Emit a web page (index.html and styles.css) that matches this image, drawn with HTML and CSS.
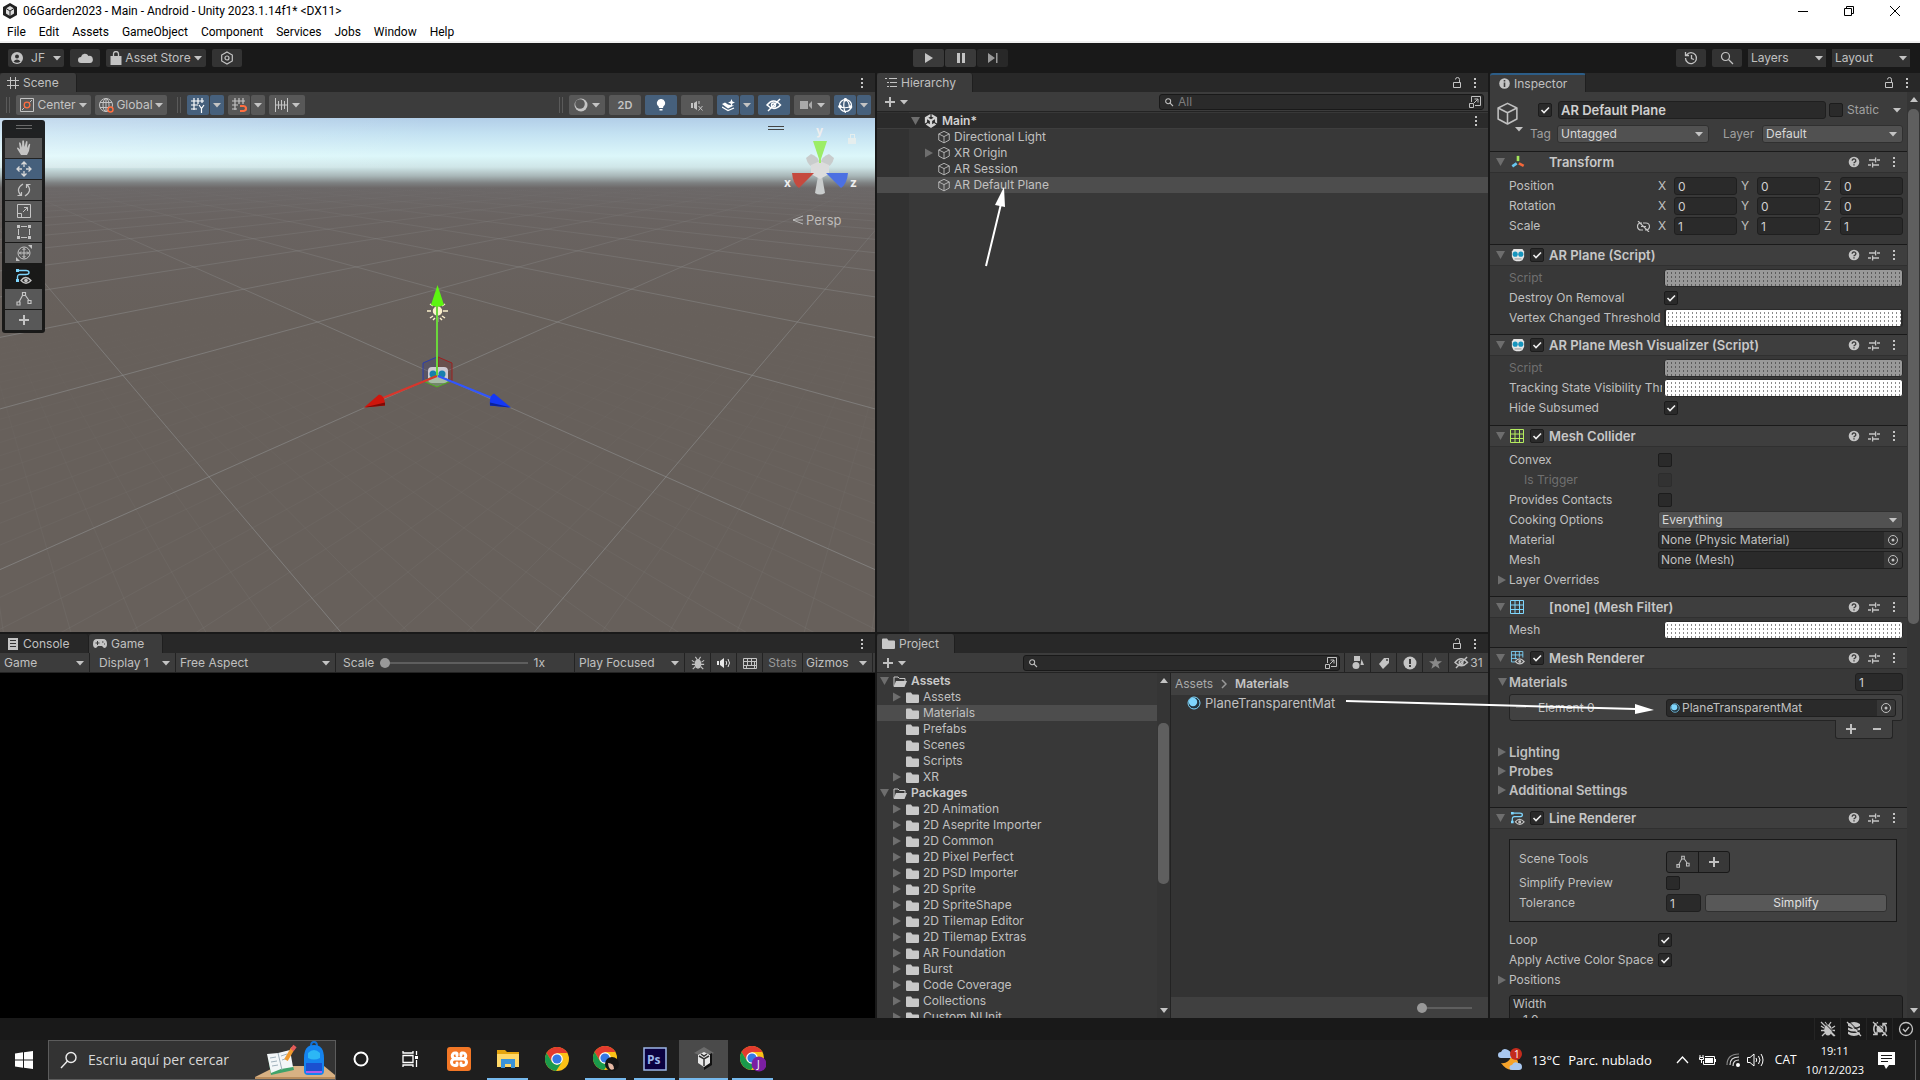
FILE: index.html
```
<!DOCTYPE html>
<html lang="ca">
<head>
    <meta charset="UTF-8">
    <title>06Garden2023 - Main - Android - Unity 2023.1.14f1* &lt;DX11&gt;</title>
    <link rel="stylesheet" href="styles.css">
</head>
<body>
    <!-- shared icons -->
    <svg class="sprite" aria-hidden="true">
        <symbol id="i-dots" viewBox="0 0 4 14"><path fill="currentColor" d="M1 2h2v2H1zM1 6h2v2H1zM1 10h2v2H1z"/></symbol>
        <symbol id="i-caret" viewBox="0 0 8 6"><path fill="currentColor" d="M0 1h8L4 5.500z"/></symbol>
        <symbol id="i-down" viewBox="0 0 10 10"><path fill="currentColor" d="M1 1h9L5.500 9z"/></symbol>
        <symbol id="i-right" viewBox="0 0 10 10"><path fill="currentColor" d="M1 0.500v9L9 5z"/></symbol>
        <symbol id="i-lock" viewBox="0 0 12 14"><g fill="none" stroke="currentColor"><path d="M2.500 6.500h7v5h-7z"/><path d="M8.500 6V3.500a2 2 0 0 0-4 0"/></g></symbol>
        <symbol id="i-cube" viewBox="0 0 16 16"><g fill="none" stroke="currentColor" stroke-linejoin="round"><path d="M8 1.500 14 4.500v7L8 14.700 2 11.500v-7z"/><path d="M2 4.500 8 7.500l6-3M8 7.500v7"/></g></symbol>
        <symbol id="i-help" viewBox="0 0 12 12"><circle cx="6" cy="6" r="5.300" fill="currentColor"/><path fill="none" stroke="#3e3e3e" stroke-width="1.400" d="M4.200 4.700a1.800 1.700 0 1 1 2.700 1.400Q6 6.500 6 7.300M6 8.300v1.300"/></symbol>
        <symbol id="i-preset" viewBox="0 0 12 12"><path fill="none" stroke="currentColor" stroke-width="1.300" d="M1 4h6M9 4h3M7.600 1.500v5M0 9h3M5 9h6M4.600 6.500v5"/></symbol>
        <symbol id="i-plus" viewBox="0 0 12 12"><path stroke="currentColor" stroke-width="2" d="M6 1v10M1 6h10"/></symbol>
        <symbol id="i-minus" viewBox="0 0 12 12"><path stroke="currentColor" stroke-width="2" d="M2 6h8"/></symbol>
        <symbol id="i-script" viewBox="0 0 16 16"><path fill="#e6e6e6" d="M3 1h10l2 3v6l-2 4-3 1H6l-3-1-2-4V4z"/><circle cx="4.800" cy="7" r="2.900" fill="#1795bd"/><circle cx="11.200" cy="7" r="2.900" fill="#1795bd"/><path stroke="#8a8a8a" d="M4 12.500h8"/></symbol>
        <symbol id="i-mesh" viewBox="0 0 14 14"><path fill="none" stroke="currentColor" d="M.5.500h13v13H.5zM5 .5v13M9.500.500v13M.5 5h13M.5 9.500h13"/></symbol>
        <symbol id="i-meshr" viewBox="0 0 16 16"><path fill="none" stroke="#7fd6fd" d="M13.500 7.500V.5H.5v12h4M5 .5v9M9.500.500v7M.5 4.500h13M.5 8.500H7"/><path fill="#3e3e3e" stroke="#c4c4c4" stroke-width="1.300" d="M5 12q4.500-6 10 0-5 5.500-10 0z"/><circle cx="10" cy="12" r="1.700" fill="#c4c4c4"/></symbol>
        <symbol id="i-line" viewBox="0 0 16 16"><path fill="none" stroke="#7fd6fd" stroke-width="1.400" d="M1 2.500h9q3 0 3 2t-3 2H4q-2.500 0-2.500 2.500v3"/><path fill="#7fd6fd" d="M0 1h3v3H0zM0 11h3v3H0z"/><path fill="#2c2c2c" stroke="#c4c4c4" stroke-width="1.300" d="M5 12.500q4.500-6 10 0-5 5.500-10 0z"/><circle cx="10" cy="12.500" r="1.800" fill="#c4c4c4"/></symbol>
        <symbol id="i-points" viewBox="0 0 16 16"><g fill="none" stroke="currentColor" stroke-width="1.200"><path d="M6.500 1.500h3v3h-3zM1 11h3v3H1zM12 9.500h3v3h-3zM3 11 6.500 4.500M9.500 4.500l3.500 5"/></g></symbol>
        <symbol id="i-target" viewBox="0 0 12 12"><circle cx="6" cy="6" r="4.500" fill="none" stroke="currentColor"/><circle cx="6" cy="6" r="1.500" fill="currentColor"/></symbol>
        <symbol id="i-search" viewBox="0 0 12 12"><g fill="none" stroke="currentColor" stroke-width="1.300"><circle cx="5" cy="5" r="3"/><path d="m7.300 7.300 3.500 3.500"/></g></symbol>
        <symbol id="i-open" viewBox="0 0 12 12"><path fill="none" stroke="currentColor" d="M2.500 6V.5h9v9H6M.5 7.500h4v4h-4zM5 7l4-4M5.500 3H9v3.500"/></symbol>
        <symbol id="i-folder" viewBox="0 0 13 11"><path fill="#c8c8c8" d="M0 1.500Q0 .5 1 .5h4l1.500 2H12q1 0 1 1V10q0 1-1 1H1q-1 0-1-1z"/></symbol>
        <symbol id="i-fopen" viewBox="0 0 14 11"><path fill="none" stroke="#c8c8c8" d="M1 10V1h4l1.500 1.500H12V5"/><path fill="#c8c8c8" d="M3 5h11l-2.500 6H.5z"/></symbol>
        <symbol id="i-mat" viewBox="0 0 14 14"><circle cx="7" cy="7" r="6" fill="#243640" stroke="#7fd6fd"/><circle cx="6" cy="6" r="4.200" fill="#7fd6fd"/></symbol>
        <symbol id="i-unity" viewBox="0 0 16 16"><path fill="currentColor" d="M7.300 0v3L5 4.300l3 1.800 3-1.800L8.700 3V0L15 3.600v7.200l-2.500-1.500V6L9.300 8v3.700l2.200-1.300 2.600 1.500L8 16l-6.100-4.100 2.600-1.500 2.200 1.300V8L3.500 6v3.300L1 10.800V3.600z"/></symbol>
        <symbol id="i-eye" viewBox="0 0 16 14"><g fill="none" stroke="currentColor" stroke-width="1.500"><path d="M1 7q6.500-8 13.500 0-6.500 7-13.500 0z"/><circle cx="7.500" cy="7" r="2"/><path d="M2 13 14 1"/></g></symbol>
        <symbol id="i-bug" viewBox="0 0 14 16"><ellipse cx="7" cy="9" rx="3.800" ry="5.500" fill="currentColor"/><path fill="none" stroke="currentColor" stroke-width="1.300" d="M4 1l2 3M10 1 8 4M0 5l3 2M14 5l-3 2M0 9.500h14M1 15l3-3M13 15l-3-3"/></symbol>
        <symbol id="i-chrome" viewBox="0 0 24 24"><circle cx="12" cy="12" r="12" fill="#fbc116"/><path fill="#e33b2e" d="M1.600 6A12 12 0 0 1 22.400 6H12L7 15z"/><path fill="#1a9a4b" d="M1.600 6A12 12 0 0 0 11 24l6-9-5 3-5-3z"/><circle cx="12" cy="12" r="5.800" fill="#fff"/><circle cx="12" cy="12" r="4.600" fill="#3578e5"/></symbol>
    </svg>

    <header class="titlebar">
        <svg class="ico16" viewBox="0 0 16 16"><path fill="#222" d="m8 0 7 4v8l-7 4-7-4V4z"/><path fill="#ddd" d="m8 3 4 2.500v5L8 13l-4-2.500v-5z"/><path stroke="#222" d="M4 5.500 8 8l4-2.500M8 8v5" fill="none"/></svg>
        <span class="title">06Garden2023 - Main - Android - Unity 2023.1.14f1* &lt;DX11&gt;</span>
        <div class="winbtns">
            <button aria-label="Minimize"><svg viewBox="0 0 10 10"><path stroke="#000" d="M0 5.500h10"/></svg></button>
            <button aria-label="Restore"><svg viewBox="0 0 10 10"><path fill="none" stroke="#000" d="M.5 2.500h7v7h-7zM2.500 2.500v-2h7v7h-2"/></svg></button>
            <button aria-label="Close"><svg viewBox="0 0 10 10"><path stroke="#000" d="m0 0 10 10M10 0 0 10"/></svg></button>
        </div>
    </header>
    <nav class="menubar">
        <a href="#">File</a><a href="#">Edit</a><a href="#">Assets</a><a href="#">GameObject</a><a href="#">Component</a><a href="#">Services</a><a href="#">Jobs</a><a href="#">Window</a><a href="#">Help</a>
    </nav>

    <div class="topbar">
        <div class="group">
            <button class="tbtn account"><svg width="12" height="12" viewBox="0 0 12 12"><circle cx="6" cy="6" r="6" fill="#c4c4c4"/><circle cx="6" cy="4.500" r="2" fill="#333"/><path fill="#333" d="M2.500 9.500Q6 5.500 9.500 9.500 6 12 2.500 9.500z"/></svg>JF<svg class="caret"><use href="#i-caret"/></svg></button>
            <button class="tbtn sq" aria-label="Cloud"><svg width="15" height="10" viewBox="0 0 15 10"><path fill="#c4c4c4" d="M3 10a3 3 0 0 1 0-6A4 4 0 0 1 10.500 3 3.500 3.500 0 0 1 12 10z"/></svg></button>
            <button class="tbtn store"><svg width="12" height="14" viewBox="0 0 12 14"><path fill="#c4c4c4" d="M.5 5h11v9H.5z"/><path fill="none" stroke="#c4c4c4" stroke-width="1.300" d="M3.500 6V3a2.500 2.500 0 0 1 5 0v3"/></svg>Asset Store<svg class="caret"><use href="#i-caret"/></svg></button>
            <button class="tbtn sq" aria-label="Services"><svg width="14" height="14" viewBox="0 0 14 14"><g fill="none" stroke="#c4c4c4" stroke-width="1.200"><path d="m7 1 5.300 3v6L7 13 1.700 10V4z"/><circle cx="7" cy="7" r="2"/></g></svg></button>
        </div>
        <div class="play">
            <button class="tbtn sq" aria-label="Play"><svg width="12" height="12" viewBox="0 0 12 12"><path fill="#c4c4c4" d="M2 1v10l8-5z"/></svg></button>
            <button class="tbtn sq" aria-label="Pause"><svg width="12" height="12" viewBox="0 0 12 12"><path fill="#c4c4c4" d="M2 1h3v10H2zM7 1h3v10H7z"/></svg></button>
            <button class="tbtn sq dim" aria-label="Step"><svg width="12" height="12" viewBox="0 0 12 12"><path fill="#999" d="M1 1v10l7-5zM9 1h1.500v10H9z"/></svg></button>
        </div>
        <div class="group right">
            <button class="tbtn sq" aria-label="History"><svg width="14" height="14" viewBox="0 0 14 14"><path fill="none" stroke="#c4c4c4" stroke-width="1.300" d="M2.500 4a5.500 5.500 0 1 1-1 3M1.500 1v3.500H5M7.500 4v3.500l2.500 1"/></svg></button>
            <button class="tbtn sq" aria-label="Search"><svg width="14" height="14" viewBox="0 0 14 14"><g fill="none" stroke="#c4c4c4" stroke-width="1.200"><circle cx="5.500" cy="5.500" r="4"/><path d="m8.500 8.500 4.500 4.500"/></g></svg></button>
            <select class="topselect" aria-label="Layers"><option>Layers</option></select>
            <select class="topselect" aria-label="Layout"><option>Layout</option></select>
        </div>
    </div>

    <main class="editor">
        <div class="column left">
            <!-- Scene -->
            <section class="panel upper">
                <div class="tabs">
                    <div class="tab scene-tab"><svg width="12" height="12" viewBox="0 0 12 12"><path stroke="#c4c4c4" d="M3.500 0v12M8.500 0v12M0 3.500h12M0 8.500h12"/></svg>Scene</div>
                    <svg class="dots"><use href="#i-dots"/></svg>
                </div>
                <div class="scenebar">
                    <i class="grip"></i>
                    <button class="sbtn pivot"><svg width="14" height="14" viewBox="0 0 14 14"><path fill="none" stroke="#c4c4c4" d="M.5.500h13v13H.5zM2 12l2.500-2.500M9.500 4.500 12 2"/><circle cx="7" cy="7" r="2.800" fill="none" stroke="#ff6e40" stroke-width="1.300"/></svg>Center<svg class="caret"><use href="#i-caret"/></svg></button>
                    <button class="sbtn space"><svg width="15" height="15" viewBox="0 0 15 15"><g fill="none" stroke="#c4c4c4"><circle cx="7" cy="7" r="6.500"/><ellipse cx="7" cy="7" rx="3" ry="6.500"/><path d="M1 4.500h12M1 9.500h12M7 .5v13"/></g><circle cx="11.500" cy="11.500" r="2.500" fill="#585858" stroke="#ff6e40" stroke-width="1.500"/></svg>Global<svg class="caret"><use href="#i-caret"/></svg></button>
                    <i class="grip wide"></i>
                    <div class="split">
                        <button class="sbtn on w22" aria-label="Grid"><svg width="15" height="15" viewBox="0 0 15 15"><path fill="none" stroke="#fff" stroke-width="1.200" d="M3 0v12M7 0v6M11 0v5M0 3h13M0 7h7M0 11h6M8 7l2.500 3.500L13 7M10.500 10.500V15"/></svg></button>
                        <button class="sbtn on w14" aria-label="Grid options"><svg class="caret"><use href="#i-caret"/></svg></button>
                    </div>
                    <div class="split">
                        <button class="sbtn w22" aria-label="Snap"><svg width="15" height="15" viewBox="0 0 15 15"><path fill="none" stroke="#c4c4c4" stroke-width="1.200" d="M3 0v12M7 0v6M11 0v6M0 3h13M0 7h6M0 11h5"/><path fill="none" stroke="#ff6e40" stroke-width="2.200" d="M8 8h3.500a2.400 2.400 0 0 1 0 5H8"/></svg></button>
                        <button class="sbtn w14" aria-label="Snap options"><svg class="caret"><use href="#i-caret"/></svg></button>
                    </div>
                    <button class="sbtn w36" aria-label="Increment"><svg width="13" height="14" viewBox="0 0 13 14"><path stroke="#c4c4c4" d="M.5 0v14M12.500 0v14M3.500 3v8M6.500 2v10M9.500 3v8M0 7h13"/></svg><svg class="caret"><use href="#i-caret"/></svg></button>
                    <span class="grow"></span>
                    <i class="grip"></i>
                    <button class="sbtn w36" aria-label="Draw mode"><svg width="14" height="14" viewBox="0 0 14 14"><circle cx="7" cy="7" r="6.500" fill="#c4c4c4"/><circle cx="6" cy="6" r="4.800" fill="#585858"/></svg><svg class="caret"><use href="#i-caret"/></svg></button>
                    <button class="sbtn w32 two">2D</button>
                    <button class="sbtn on w32" aria-label="Lighting"><svg width="10" height="12" viewBox="0 0 10 12"><path fill="#fff" d="M5 0a4 4 0 0 1 2.500 7.200L7 9H3l-.5-1.800A4 4 0 0 1 5 0zM3.500 10h3v1.500h-3z"/></svg></button>
                    <button class="sbtn w32" aria-label="Audio"><svg width="12" height="11" viewBox="0 0 12 11"><path fill="#c4c4c4" d="M0 3h2v5H0zM3 3l3-2v9L3 8z"/><path stroke="#c4c4c4" d="m7.500 6 4 4.500M11.500 6l-4 4.500M8 1v3"/></svg></button>
                    <div class="split">
                        <button class="sbtn on w22" aria-label="Effects"><svg width="13" height="13" viewBox="0 0 13 13"><path fill="#fff" d="m0 5 3-1.500 3 2 2 .5 4 .5L6 9.500zM9.500 0l1 2.500L13 3.500l-2.500 1-1 2.500-1-2.500L6 3.500l2.500-1z"/><path fill="none" stroke="#fff" stroke-width="1.300" d="m0 8 6 3.500L12 9"/></svg></button>
                        <button class="sbtn on w14" aria-label="Effects options"><svg class="caret"><use href="#i-caret"/></svg></button>
                    </div>
                    <button class="sbtn on w32" aria-label="Visibility"><svg width="16" height="14"><use href="#i-eye"/></svg></button>
                    <button class="sbtn w36" aria-label="Camera"><svg width="13" height="10" viewBox="0 0 13 10"><path fill="#aaa" d="M0 1h8v8H0zM9 4l3-3v8L9 6z"/></svg><svg class="caret"><use href="#i-caret"/></svg></button>
                    <div class="split">
                        <button class="sbtn on w22" aria-label="Gizmos"><svg width="15" height="15" viewBox="0 0 15 15"><g fill="none" stroke="#fff" stroke-width="1.200"><circle cx="7.500" cy="7.500" r="6"/><path d="M7.500 0Q4 7 7.500 15M1 8q6 3.500 13 0M7 1q4 2 4.500 8"/></g><circle cx="7.500" cy="1.800" r="1.800" fill="#fff"/><circle cx="2" cy="8.500" r="1.800" fill="#fff"/><circle cx="12.500" cy="9" r="1.800" fill="#fff"/></svg></button>
                        <button class="sbtn on w14" aria-label="Gizmo options"><svg class="caret"><use href="#i-caret"/></svg></button>
                    </div>
                </div>
                <div class="viewport">
                    <svg class="world" viewBox="0 0 875 514" preserveAspectRatio="xMidYMin slice">
                        <defs>
                            <linearGradient id="fadeMajor" gradientUnits="userSpaceOnUse" x1="0" y1="68" x2="0" y2="514"><stop offset="0" stop-color="#8f9090" stop-opacity="0"/><stop offset=".12" stop-color="#8f9090" stop-opacity=".25"/><stop offset=".35" stop-color="#8f9090" stop-opacity=".55"/><stop offset="1" stop-color="#8f9090" stop-opacity=".55"/></linearGradient>
                            <linearGradient id="fadeMinor" gradientUnits="userSpaceOnUse" x1="0" y1="190" x2="0" y2="514"><stop offset="0" stop-color="#8f9090" stop-opacity="0"/><stop offset="1" stop-color="#8f9090" stop-opacity=".14"/></linearGradient>
                        </defs>
                        <path id="minor" fill="none" stroke="url(#fadeMinor)"/>
                        <path id="major" fill="none" stroke="url(#fadeMajor)"/>
                        <!-- transform handles of the selected object -->
                        <path fill="#3c3a78" fill-opacity=".3" stroke="#2a3cae" d="m437 239-14 6v18l14-7z"/>
                        <path fill="#6c2a30" fill-opacity=".3" stroke="#9b2020" d="m438 239 14 6v18l-14-7z"/>
                        <rect x="428" y="249" width="20" height="16" rx="4" fill="#cfcad2"/>
                        <circle cx="433" cy="256" r="3.500" fill="#1880ad"/><circle cx="442" cy="256" r="3.500" fill="#1880ad"/>
                        <path fill="#7fae7a" fill-opacity=".5" stroke="#4fae1c" d="m437 257-14 6 14 6 14-6z"/>
                        <g stroke="#fbefcb" stroke-width="1.500"><path d="M427 193h4M443 193h5M430 186l3 2M445 186l-3 2M430 200l3-2M445 200l-3-2M433 202l2-2M442 202l-2-2M437.500 199v5"/><circle cx="437.500" cy="193" r="4" fill="#fbefcb"/></g>
                        <path stroke="#6bd63c" stroke-width="2" d="M437 258v-72"/>
                        <path fill="#5cf511" d="m437.500 167-6.500 20q6.500 3 13 0z"/>
                        <path stroke="#d8362c" stroke-width="2" d="m437 258-54 22"/>
                        <path fill="#cf160d" d="m364 289.500 15-13q6 1 6 11z"/><path fill="#7e0a06" d="m364 289.500 21-2v-3z"/>
                        <path stroke="#3156ff" stroke-width="2" d="m438 258 54 22"/>
                        <path fill="#1438f5" d="m511 289.500-17-14q-5 2-4 12z"/><path fill="#0a229b" d="m511 289.500-21-2v-3z"/>
                    </svg>
                    <div class="tools">
                        <i class="bars"></i>
                        <button class="tool" aria-label="View"><svg viewBox="0 0 16 16"><path fill="#c4c4c4" d="M5 15 1 8.500q0-1.500 1.500-.5L4 9.500 3 3q.7-1.500 1.600 0L6 7.500 6.300 1q.8-1.400 1.700 0l.5 6L10 1.500q1-1 1.500.3L11 8l2-4q1.200-.6 1.200.6L13 11l-2 4z"/></svg></button>
                        <button class="tool on" aria-label="Move"><svg viewBox="0 0 16 16"><path fill="none" stroke="#d8d8d8" stroke-width="1.300" d="M8 6V1M5.500 3.500 8 1l2.500 2.500M8 10v5M5.500 12.500 8 15l2.500-2.500M6 8H1M3.500 5.500 1 8l2.500 2.500M10 8h5M12.500 5.500 15 8l-2.500 2.500"/></svg></button>
                        <button class="tool" aria-label="Rotate"><svg viewBox="0 0 16 16"><path fill="none" stroke="#c4c4c4" stroke-width="1.200" d="M7 2Q-1 7 5 13.500M1.500 13.500h4V10M9 14q8-5 2-11.500M14.500 2.500h-4V6"/></svg></button>
                        <button class="tool" aria-label="Scale"><svg viewBox="0 0 16 16"><path fill="none" stroke="#c4c4c4" d="M1.500 1.500h13v13h-13zM1.500 10.500h4v4M7 9l4.500-4.500M8 4.500h3.500V8"/></svg></button>
                        <button class="tool" aria-label="Rect"><svg viewBox="0 0 16 16"><path fill="none" stroke="#c4c4c4" d="M5 2.500h6M5 13.500h6M2.500 5v6M13.500 5v6"/><path fill="#c4c4c4" d="M1 1h3v3H1zM12 1h3v3h-3zM1 12h3v3H1zM12 12h3v3h-3z"/></svg></button>
                        <button class="tool" aria-label="Transform"><svg viewBox="0 0 16 16"><g fill="none" stroke="#c4c4c4"><circle cx="8" cy="8" r="6"/><path d="M8 3v10M3 8h10M6.500 5 8 3.500 9.500 5M6.500 11 8 12.500 9.500 11M5 6.500 3.500 8 5 9.500M11 6.500 12.500 8 11 9.500"/></g><path fill="#c4c4c4" d="M12 0h4v4zM0 12v4h4z"/></svg></button>
                        <button class="tool bare" aria-label="Line"><svg><use href="#i-line"/></svg></button>
                        <button class="tool" aria-label="Edit points"><svg><use href="#i-points"/></svg></button>
                        <button class="tool" aria-label="Add points"><svg viewBox="0 0 16 16"><path stroke="#c4c4c4" stroke-width="2" d="M8 3v10M3 8h10"/></svg></button>
                    </div>
                    <svg class="orient" width="110" height="120" viewBox="0 0 110 120">
                        <path stroke="#444" d="M3 8.500h16M3 11.500h16"/>
                        <g fill="#c9cccc"><path d="m41 40 5-4q7 2 9 10l-4 4q-8-1-10-10z"/><path d="m69 40-5-4q-7 2-9 10l4 4q8-1 10-10z"/><path d="m50 75 3-17h4l3 17q-5 3-10 0z"/><path fill="#dcdcdc" d="m55 43 9 4v9l-9 5-9-5v-9z"/></g>
                        <path fill="#9ced66" d="M48 23h14l-6 18v4h-2v-4z"/>
                        <path fill="#c54a3f" d="M27 55h22L34 70q-6-4-7-15z"/>
                        <path fill="#4c70e2" d="M83 55H61l15 15q6-4 7-15z"/>
                        <g class="axis"><text x="51" y="17">y</text><text x="19" y="69">x</text><text x="85" y="69">z</text></g>
                        <path fill="none" stroke="#bbb" d="m38 98-10 4 10 4M28 102h10"/>
                        <text class="persp" x="41" y="107">Persp</text>
                        <path fill="#e5eeee" d="M83 20h8v6h-8zM85 16h5v4h-1v-3h-3v3h-1z"/>
                    </svg>
                </div>
            </section>

            <!-- Game -->
            <section class="panel lower">
                <div class="tabs">
                    <div class="tab off console-tab"><svg width="11" height="12" viewBox="0 0 11 12"><path fill="#c4c4c4" d="M0 0h10v12H0z"/><path stroke="#333" d="M2 2.500h6M2 5.500h6M2 8.500h6"/></svg>Console</div>
                    <div class="tab game-tab"><svg width="14" height="9" viewBox="0 0 14 9"><path fill="#c4c4c4" d="M4 0h6q4 0 4 5 0 4-3 4L9 7H5L3 9Q0 9 0 5q0-5 4-5z"/><path stroke="#3c3c3c" d="M2.500 4h4M4.500 2v4M9 3h1.500M11 5h1"/></svg>Game</div>
                    <svg class="dots"><use href="#i-dots"/></svg>
                </div>
                <div class="gamebar">
                    <select class="gsel g-view" aria-label="View"><option>Game</option></select>
                    <select class="gsel g-display" aria-label="Display"><option>Display 1</option></select>
                    <select class="gsel g-aspect" aria-label="Aspect"><option>Free Aspect</option></select>
                    <div class="g-scale"><label for="scale">Scale</label><input class="slider" id="scale" type="range" min="0" max="100" value="0"><span>1x</span></div>
                    <select class="gsel g-focus" aria-label="Play mode"><option>Play Focused</option></select>
                    <button class="gbtn" aria-label="Debug"><svg width="14" height="14"><use href="#i-bug"/></svg></button>
                    <button class="gbtn" aria-label="Mute"><svg width="14" height="12" viewBox="0 0 14 12"><path fill="#e8e8e8" d="M0 4h2v4H0zM3 4l4-3v10L3 8z"/><path fill="none" stroke="#e8e8e8" d="M9 4q1.500 2 0 4M11 2q3 4 0 8"/></svg></button>
                    <button class="gbtn" aria-label="Shortcuts"><svg width="14" height="11" viewBox="0 0 14 11"><path fill="none" stroke="#c4c4c4" d="M.5.500h13v10H.5zM0 3.500h14M0 7.500h14M4.500 0v7M8.500 0v7M11.500 3v8M3.500 7v4"/></svg></button>
                    <button class="gbtn stats">Stats</button>
                    <select class="gsel g-gizmos" aria-label="Gizmos"><option>Gizmos</option></select>
                </div>
                <div class="gameview"></div>
            </section>
        </div>

        <div class="column middle">
            <!-- Hierarchy -->
            <section class="panel upper">
                <div class="tabs">
                    <div class="tab hier-tab"><svg width="12" height="11" viewBox="0 0 12 11"><path stroke="#c4c4c4" stroke-width="1.200" d="M0 1.500h2M4 1.500h8M2 5.500h2M5 5.500h7M2 9.500h2M5 9.500h7"/></svg>Hierarchy</div>
                    <svg class="lock"><use href="#i-lock"/></svg><svg class="dots"><use href="#i-dots"/></svg>
                </div>
                <div class="listbar">
                    <button class="add" aria-label="Create"><svg width="12" height="12"><use href="#i-plus"/></svg><svg class="caret"><use href="#i-caret"/></svg></button>
                    <div class="search hsearch"><svg width="10" height="10"><use href="#i-search"/></svg><input type="text" placeholder="All" aria-label="Search hierarchy"><svg class="open"><use href="#i-open"/></svg></div>
                </div>
                <ul class="hierarchy">
                    <li class="scene-row"><svg class="fold"><use href="#i-down"/></svg><svg class="uni"><use href="#i-unity"/></svg><b>Main*</b><svg class="dots"><use href="#i-dots"/></svg></li>
                    <li><svg class="fold"></svg><svg class="ico14"><use href="#i-cube"/></svg>Directional Light</li>
                    <li><svg class="fold"><use href="#i-right"/></svg><svg class="ico14"><use href="#i-cube"/></svg>XR Origin</li>
                    <li><svg class="fold"></svg><svg class="ico14"><use href="#i-cube"/></svg>AR Session</li>
                    <li class="selected"><svg class="fold"></svg><svg class="ico14"><use href="#i-cube"/></svg>AR Default Plane</li>
                </ul>
            </section>

            <!-- Project -->
            <section class="panel lower">
                <div class="tabs">
                    <div class="tab proj-tab"><svg width="13" height="11"><use href="#i-folder"/></svg>Project</div>
                    <svg class="lock"><use href="#i-lock"/></svg><svg class="dots"><use href="#i-dots"/></svg>
                </div>
                <div class="listbar project-bar">
                    <button class="add" aria-label="Create asset"><svg width="12" height="12"><use href="#i-plus"/></svg><svg class="caret"><use href="#i-caret"/></svg></button>
                    <div class="search psearch"><svg width="10" height="10"><use href="#i-search"/></svg><input type="text" aria-label="Search project"><svg class="open"><use href="#i-open"/></svg></div>
                    <div class="filters">
                        <button aria-label="By type"><svg width="12" height="13" viewBox="0 0 12 13"><path fill="#c4c4c4" d="M2 0h6v5H2zM9.500 3l2.500 6H8.500z"/><circle cx="4" cy="9.500" r="3.500" fill="#c4c4c4"/></svg></button>
                        <button aria-label="By label"><svg width="12" height="12" viewBox="0 0 12 12"><path fill="#c4c4c4" d="M6 1h5v5l-6 6-4-5z"/><circle cx="9" cy="3" r="1" fill="#3c3c3c"/></svg></button>
                        <button aria-label="By log"><svg width="14" height="14" viewBox="0 0 14 14"><circle cx="7" cy="7" r="6.500" fill="#c4c4c4"/><path stroke="#3c3c3c" stroke-width="2" d="M7 3v5M7 9v2"/></svg></button>
                        <button aria-label="Favorites"><svg width="13" height="12" viewBox="0 0 13 12"><path fill="#888" d="m6.500 0 1.700 4.300H13L9.200 7.200l1.400 4.600-4.100-2.700-4.100 2.700 1.400-4.600L0 4.300h4.800z"/></svg></button>
                        <button class="hidden-count"><svg width="15" height="13"><use href="#i-eye"/></svg>31</button>
                    </div>
                </div>
                <div class="browser">
                    <ul class="tree">
                        <li class="root"><svg class="fold"><use href="#i-down"/></svg><svg class="fo"><use href="#i-fopen"/></svg><b>Assets</b></li>
                        <li><svg class="fold"><use href="#i-right"/></svg><svg class="fd"><use href="#i-folder"/></svg>Assets</li>
                        <li class="selected"><svg class="fold"></svg><svg class="fd"><use href="#i-folder"/></svg>Materials</li>
                        <li><svg class="fold"></svg><svg class="fd"><use href="#i-folder"/></svg>Prefabs</li>
                        <li><svg class="fold"></svg><svg class="fd"><use href="#i-folder"/></svg>Scenes</li>
                        <li><svg class="fold"></svg><svg class="fd"><use href="#i-folder"/></svg>Scripts</li>
                        <li><svg class="fold"><use href="#i-right"/></svg><svg class="fd"><use href="#i-folder"/></svg>XR</li>
                        <li class="root"><svg class="fold"><use href="#i-down"/></svg><svg class="fo"><use href="#i-fopen"/></svg><b>Packages</b></li>
                        <li><svg class="fold"><use href="#i-right"/></svg><svg class="fd"><use href="#i-folder"/></svg>2D Animation</li>
                        <li><svg class="fold"><use href="#i-right"/></svg><svg class="fd"><use href="#i-folder"/></svg>2D Aseprite Importer</li>
                        <li><svg class="fold"><use href="#i-right"/></svg><svg class="fd"><use href="#i-folder"/></svg>2D Common</li>
                        <li><svg class="fold"><use href="#i-right"/></svg><svg class="fd"><use href="#i-folder"/></svg>2D Pixel Perfect</li>
                        <li><svg class="fold"><use href="#i-right"/></svg><svg class="fd"><use href="#i-folder"/></svg>2D PSD Importer</li>
                        <li><svg class="fold"><use href="#i-right"/></svg><svg class="fd"><use href="#i-folder"/></svg>2D Sprite</li>
                        <li><svg class="fold"><use href="#i-right"/></svg><svg class="fd"><use href="#i-folder"/></svg>2D SpriteShape</li>
                        <li><svg class="fold"><use href="#i-right"/></svg><svg class="fd"><use href="#i-folder"/></svg>2D Tilemap Editor</li>
                        <li><svg class="fold"><use href="#i-right"/></svg><svg class="fd"><use href="#i-folder"/></svg>2D Tilemap Extras</li>
                        <li><svg class="fold"><use href="#i-right"/></svg><svg class="fd"><use href="#i-folder"/></svg>AR Foundation</li>
                        <li><svg class="fold"><use href="#i-right"/></svg><svg class="fd"><use href="#i-folder"/></svg>Burst</li>
                        <li><svg class="fold"><use href="#i-right"/></svg><svg class="fd"><use href="#i-folder"/></svg>Code Coverage</li>
                        <li><svg class="fold"><use href="#i-right"/></svg><svg class="fd"><use href="#i-folder"/></svg>Collections</li>
                        <li><svg class="fold"><use href="#i-right"/></svg><svg class="fd"><use href="#i-folder"/></svg>Custom NUnit</li>
                    </ul>
                    <div class="scroll tree-scroll"><i class="up"></i><i class="thumb"></i><i class="down"></i></div>
                    <div class="assets">
                        <div class="crumbs">Assets<svg width="6" height="10" viewBox="0 0 6 10"><path fill="none" stroke="#999" stroke-width="1.500" d="m1 1 4 4-4 4"/></svg><b>Materials</b></div>
                        <div class="asset"><svg class="ico14"><use href="#i-mat"/></svg>PlaneTransparentMat</div>
                        <div class="assets-foot"><input class="slider" type="range" min="0" max="100" value="0" aria-label="Icon size"></div>
                    </div>
                </div>
            </section>
        </div>

        <!-- Inspector -->
        <section class="panel inspector">
            <div class="tabs">
                <div class="tab focus insp-tab"><svg width="11" height="11" viewBox="0 0 11 11"><circle cx="5.500" cy="5.500" r="5.300" fill="#c4c4c4"/><path stroke="#3c3c3c" stroke-width="1.600" d="M5.500 4.500v4.500M5.500 2v1.500"/></svg>Inspector</div>
                <svg class="lock"><use href="#i-lock"/></svg><svg class="dots"><use href="#i-dots"/></svg>
            </div>
            <div class="insp-body">
                <div class="props">
                    <div class="object">
                        <div class="objicon"><svg class="bigcube"><use href="#i-cube"/></svg><svg class="caret"><use href="#i-caret"/></svg></div>
                        <div class="object-rows">
                            <div class="orow">
                                <input type="checkbox" class="check" checked aria-label="Active">
                                <input type="text" class="field name" value="AR Default Plane" aria-label="Name">
                                <input type="checkbox" class="check" id="static"><label class="static" for="static">Static</label><svg class="caret"><use href="#i-caret"/></svg>
                            </div>
                            <div class="orow">
                                <label class="taglabel" for="tag">Tag</label><select class="drop tag" id="tag"><option>Untagged</option></select>
                                <label class="layerlabel" for="layer">Layer</label><select class="drop layer" id="layer"><option>Default</option></select>
                            </div>
                        </div>
                    </div>

                    <div class="comp">
                        <div class="comp-head"><svg class="fold"><use href="#i-down"/></svg><svg class="cico" viewBox="0 0 16 16"><path stroke="#a5e65b" stroke-width="3" d="M8 1v6"/><path stroke="#68c6ef" stroke-width="3" d="m1.500 13 5-3.500"/><path stroke="#f4673a" stroke-width="3" d="m9 9.500 5.500 3"/></svg><span class="nocheck"></span><b>Transform</b><svg class="hico"><use href="#i-help"/></svg><svg class="hico"><use href="#i-preset"/></svg><svg class="dots"><use href="#i-dots"/></svg></div>
                        <div class="comp-body transform">
                            <div class="row vec"><span class="lbl">Position</span><label for="px">X</label><input class="field" id="px" value="0"><label for="py">Y</label><input class="field" id="py" value="0"><label for="pz">Z</label><input class="field" id="pz" value="0"></div>
                            <div class="row vec"><span class="lbl">Rotation</span><label for="rx">X</label><input class="field" id="rx" value="0"><label for="ry">Y</label><input class="field" id="ry" value="0"><label for="rz">Z</label><input class="field" id="rz" value="0"></div>
                            <div class="row vec"><span class="lbl">Scale<svg class="link" viewBox="0 0 13 11"><path fill="none" stroke="#c4c4c4" stroke-width="1.200" d="M5 2H4a3.500 3.500 0 0 0 0 7h2M6 2h3a3.500 3.500 0 0 1 0 7H8M4 5.500h5M1 0l11 11"/></svg></span><label for="sx">X</label><input class="field" id="sx" value="1"><label for="sy">Y</label><input class="field" id="sy" value="1"><label for="sz">Z</label><input class="field" id="sz" value="1"></div>
                        </div>
                    </div>

                    <div class="comp">
                        <div class="comp-head"><svg class="fold"><use href="#i-down"/></svg><svg class="cico"><use href="#i-script"/></svg><input type="checkbox" class="check" checked aria-label="Enable AR Plane"><b>AR Plane (Script)</b><svg class="hico"><use href="#i-help"/></svg><svg class="hico"><use href="#i-preset"/></svg><svg class="dots"><use href="#i-dots"/></svg></div>
                        <div class="comp-body plane">
                            <div class="row shift dis"><label class="lbl" for="s1">Script</label><input class="dotted" id="s1" disabled></div>
                            <div class="row shift"><label class="lbl" for="destroy">Destroy On Removal</label><input type="checkbox" class="check" id="destroy" checked></div>
                            <div class="row shift"><label class="lbl" for="vct">Vertex Changed Threshold</label><input class="dotted framed" id="vct"></div>
                        </div>
                    </div>

                    <div class="comp">
                        <div class="comp-head"><svg class="fold"><use href="#i-down"/></svg><svg class="cico"><use href="#i-script"/></svg><input type="checkbox" class="check" checked aria-label="Enable AR Plane Mesh Visualizer"><b>AR Plane Mesh Visualizer (Script)</b><svg class="hico"><use href="#i-help"/></svg><svg class="hico"><use href="#i-preset"/></svg><svg class="dots"><use href="#i-dots"/></svg></div>
                        <div class="comp-body plane visual">
                            <div class="row shift dis"><label class="lbl" for="s2">Script</label><input class="dotted" id="s2" disabled></div>
                            <div class="row shift"><label class="lbl" for="tsv">Tracking State Visibility Threshold</label><input class="dotted" id="tsv"></div>
                            <div class="row shift"><label class="lbl" for="hide">Hide Subsumed</label><input type="checkbox" class="check" id="hide" checked></div>
                        </div>
                    </div>

                    <div class="comp">
                        <div class="comp-head"><svg class="fold"><use href="#i-down"/></svg><svg class="cico mesh green"><use href="#i-mesh"/></svg><input type="checkbox" class="check" checked aria-label="Enable Mesh Collider"><b>Mesh Collider</b><svg class="hico"><use href="#i-help"/></svg><svg class="hico"><use href="#i-preset"/></svg><svg class="dots"><use href="#i-dots"/></svg></div>
                        <div class="comp-body collider">
                            <div class="row"><label class="lbl" for="convex">Convex</label><input type="checkbox" class="check" id="convex"></div>
                            <div class="row dis"><label class="lbl sub" for="trigger">Is Trigger</label><input type="checkbox" class="check" id="trigger" disabled></div>
                            <div class="row"><label class="lbl" for="contacts">Provides Contacts</label><input type="checkbox" class="check" id="contacts"></div>
                            <div class="row"><label class="lbl" for="cooking">Cooking Options</label><select class="drop" id="cooking"><option>Everything</option></select></div>
                            <div class="row"><label class="lbl" for="pmat">Material</label><div class="objfield"><input id="pmat" value="None (Physic Material)"><button aria-label="Select material"><svg><use href="#i-target"/></svg></button></div></div>
                            <div class="row"><label class="lbl" for="cmesh">Mesh</label><div class="objfield"><input id="cmesh" value="None (Mesh)"><button aria-label="Select mesh"><svg><use href="#i-target"/></svg></button></div></div>
                            <div class="row"><svg class="fold"><use href="#i-right"/></svg><span class="lbl">Layer Overrides</span></div>
                        </div>
                    </div>

                    <div class="comp">
                        <div class="comp-head"><svg class="fold"><use href="#i-down"/></svg><svg class="cico mesh blue"><use href="#i-mesh"/></svg><span class="nocheck"></span><b>[none] (Mesh Filter)</b><svg class="hico"><use href="#i-help"/></svg><svg class="hico"><use href="#i-preset"/></svg><svg class="dots"><use href="#i-dots"/></svg></div>
                        <div class="comp-body filter">
                            <div class="row shift"><label class="lbl" for="fmesh">Mesh</label><input class="dotted" id="fmesh"></div>
                        </div>
                    </div>

                    <div class="comp">
                        <div class="comp-head"><svg class="fold"><use href="#i-down"/></svg><svg class="cico"><use href="#i-meshr"/></svg><input type="checkbox" class="check" checked aria-label="Enable Mesh Renderer"><b>Mesh Renderer</b><svg class="hico"><use href="#i-help"/></svg><svg class="hico"><use href="#i-preset"/></svg><svg class="dots"><use href="#i-dots"/></svg></div>
                        <div class="comp-body renderer">
                            <div class="row"><svg class="fold"><use href="#i-down"/></svg><label class="lbl" for="count"><b>Materials</b></label><input class="field count" id="count" value="1"></div>
                            <div class="element"><i class="handle"></i><label for="el0">Element 0</label><div class="objfield"><svg class="ball"><use href="#i-mat"/></svg><input id="el0" value="PlaneTransparentMat"><button aria-label="Select material"><svg><use href="#i-target"/></svg></button></div></div>
                            <div class="listfoot"><button aria-label="Add"><svg><use href="#i-plus"/></svg></button><button aria-label="Remove"><svg><use href="#i-minus"/></svg></button></div>
                            <div class="folds">
                                <div><svg class="fold"><use href="#i-right"/></svg><b>Lighting</b></div>
                                <div><svg class="fold"><use href="#i-right"/></svg><b>Probes</b></div>
                                <div><svg class="fold"><use href="#i-right"/></svg><b>Additional Settings</b></div>
                            </div>
                        </div>
                    </div>

                    <div class="comp">
                        <div class="comp-head"><svg class="fold"><use href="#i-down"/></svg><svg class="cico"><use href="#i-line"/></svg><input type="checkbox" class="check" checked aria-label="Enable Line Renderer"><b>Line Renderer</b><svg class="hico"><use href="#i-help"/></svg><svg class="hico"><use href="#i-preset"/></svg><svg class="dots"><use href="#i-dots"/></svg></div>
                        <div class="comp-body line">
                            <div class="toolbox">
                                <div class="trow tall"><span class="tl">Scene Tools</span><div class="pair"><button aria-label="Edit points"><svg width="16" height="14"><use href="#i-points"/></svg></button><button aria-label="Create points"><svg width="12" height="12"><use href="#i-plus"/></svg></button></div></div>
                                <div class="trow"><label class="tl" for="simp">Simplify Preview</label><input type="checkbox" class="check" id="simp"></div>
                                <div class="trow"><label class="tl" for="tol">Tolerance</label><input class="field tol" id="tol" value="1"><button class="simplify">Simplify</button></div>
                            </div>
                            <div class="row"><label class="lbl" for="loop">Loop</label><input type="checkbox" class="check" id="loop" checked></div>
                            <div class="row"><label class="lbl" for="aacs">Apply Active Color Space</label><input type="checkbox" class="check" id="aacs" checked></div>
                            <div class="row"><svg class="fold"><use href="#i-right"/></svg><span class="lbl">Positions</span></div>
                            <div class="width"><span>Width</span><span class="wval">1.0</span></div>
                        </div>
                    </div>
                </div>
                <div class="scroll insp-scroll"><i class="up"></i><i class="thumb"></i><i class="down"></i></div>
            </div>
        </section>
    </main>

    <div class="statusbar">
        <button aria-label="Debugger"><svg viewBox="0 0 16 16"><use href="#i-bug" width="16" height="16"/><path stroke="#191919" d="m2.500 0 13 13"/><path stroke="#c4c4c4" stroke-width="1.300" d="m1 1 14 14"/></svg></button>
        <button aria-label="Cache server"><svg viewBox="0 0 16 16"><path fill="#c4c4c4" d="M2 3q6-4 12 0v2q-6 3-12 0zM2 6.500q6 3 12 0V9q-6 3-12 0zM2 10.500q6 3 12 0V13q-6 4-12 0z"/><path stroke="#191919" d="m2.500 0 13 13"/><path stroke="#c4c4c4" stroke-width="1.300" d="m1 1 14 14"/></svg></button>
        <button aria-label="Auto refresh"><svg viewBox="0 0 16 16"><path fill="none" stroke="#c4c4c4" stroke-width="1.500" d="M6 1.500A7 7 0 0 0 4 13M1 13.500h4v-3M10 14.500A7 7 0 0 0 12 3M15 2.500h-4v3"/><circle cx="8" cy="8" r="3.500" fill="#c4c4c4"/><path stroke="#191919" d="m2.500 0 13 13"/><path stroke="#c4c4c4" stroke-width="1.300" d="m1 1 14 14"/></svg></button>
        <button aria-label="Progress"><svg viewBox="0 0 16 16"><g fill="none" stroke="#c4c4c4" stroke-width="1.300"><circle cx="8" cy="8" r="6.500"/><path d="m5 8 2.300 2.500L11 6"/></g></svg></button>
    </div>

    <footer class="taskbar">
        <button class="start" aria-label="Inici"><svg width="18" height="18" viewBox="0 0 18 18"><path fill="#fff" d="M0 2.500 8 1.300v7.200H0zM9 1.200 18 0v8.500H9zM0 9.500h8v7.200L0 15.500zM9 9.500h9V18l-9-1.200z"/></svg></button>
        <div class="wsearch">
            <svg width="18" height="18" viewBox="0 0 18 18"><g fill="none" stroke="#eee" stroke-width="1.400"><circle cx="11" cy="6.500" r="5"/><path d="M7.500 10 1 17"/></g></svg>
            <input type="text" placeholder="Escriu aquí per cercar" aria-label="Cerca">
            <svg class="art" width="80" height="38" viewBox="0 0 80 38"><path fill="#d8b183" d="M22 25h47l11 9v4H0v-2z"/><path fill="#b98c5c" d="M0 36h80v2H0z"/><path fill="#3fa36a" d="m13 16 3 18 23-5-1-4-20 4-2-13z"/><path fill="#f3f6f8" d="m12 13 11-1 12-3 3 17-12 2-10 4z"/><path stroke="#9fb0bb" fill="none" d="m23 12 4 17M15 17l6-1M16 21l6-1M17 25l6-1M26 15l6-2M27 19l6-2"/><path stroke="#f09a2f" stroke-width="4" d="m31 19 7-12"/><path stroke="#e35a5a" stroke-width="4" d="m37 9 3-4"/><path fill="none" stroke="#1271d8" stroke-width="2" d="M56 5q0-4 3-4t3 4"/><path fill="#1583ee" d="M49 17Q49 4 59 4t10 13v13q0 4-4 4H53q-4 0-4-4z"/><path fill="#2cb7f5" d="M53 12q6-6 12 0v5q-6 3-12 0z"/><path fill="#1b50d0" d="M51 22h16v8H51z"/><path stroke="#b45be6" stroke-width="2" d="M51 31h16"/></svg>
        </div>
        <button class="app" aria-label="Cortana"><svg width="16" height="16" viewBox="0 0 16 16"><circle cx="8" cy="8" r="6.500" fill="none" stroke="#fff" stroke-width="2"/></svg></button>
        <button class="app" aria-label="Vista de tasques"><svg width="16" height="16" viewBox="0 0 16 16"><path fill="none" stroke="#fff" stroke-width="1.300" d="M1 4.500h10v7H1zM1 0v2h10V0M1 16v-2h10v2M14.500 0v4M14.500 9v7"/><path fill="#fff" d="M13 5h3v3h-3z"/></svg></button>
        <button class="app" aria-label="XAMPP"><svg width="24" height="24" viewBox="0 0 24 24"><rect width="24" height="24" rx="3" fill="#f37726"/><g fill="none" stroke="#fff" stroke-width="3" stroke-linecap="round"><path d="M9.500 6H8a2.500 2.500 0 0 0 0 5.500h8A2.500 2.500 0 0 0 16 6h-1.500M9.500 18.500H8a3 3 0 0 1-.5-6.500h9a3 3 0 0 1-.5 6.500h-1.500M10 6.500v2M14 6.500v2M10 16v2M14 16v2"/></g></svg></button>
        <button class="app run" aria-label="Explorador"><svg width="22" height="20" viewBox="0 0 22 20"><path fill="#e5a50f" d="M0 1h8l2 2h12v5H0z"/><path fill="#ffd868" d="M0 5h22v13H0z"/><path fill="#3a93d8" d="M4 10h14v9h-4v-4H8v4H4z"/></svg></button>
        <button class="app" aria-label="Chrome"><svg width="24" height="24"><use href="#i-chrome"/></svg></button>
        <button class="app run" aria-label="Chrome"><svg width="26" height="26" viewBox="0 0 26 26"><use href="#i-chrome" width="24" height="24"/><circle cx="19" cy="18" r="7" fill="#151515"/><path fill="#e6b9a4" d="M15 17q6 0 6 6-5 3-6-6z"/></svg></button>
        <button class="app run" aria-label="Photoshop"><svg width="24" height="24" viewBox="0 0 24 24"><path fill="#0b0140" stroke="#9db7e8" stroke-width="1.500" d="M1 1h22v22H1z"/><text class="ps" x="4" y="17">Ps</text></svg></button>
        <button class="app run active" aria-label="Unity"><svg width="20" height="24" viewBox="0 0 20 24"><path fill="#6c6c6c" d="m10 0 10 6-10 4L0 6z"/><path fill="#111" d="m10 10 8-4v12l-8 5z"/><path fill="#e8e8e8" d="m10 5 6 3v8l-6 4-6-4V8z"/><path fill="none" stroke="#333" stroke-width="1.500" d="m5 9 5 3 5-3M10 12v7M7 7l3 2 3-2"/></svg></button>
        <button class="app run" aria-label="Chrome"><svg width="26" height="26" viewBox="0 0 26 26"><use href="#i-chrome" width="24" height="24"/><circle cx="19" cy="18" r="7.500" fill="#7b1fa2"/><text class="avatar" x="17" y="22">J</text></svg></button>
        <span class="grow"></span>
        <button class="weather"><svg width="26" height="24" viewBox="0 0 26 24"><path fill="#f5a32b" d="M3 15q7 1 10-6 10 2 6 10-8 7-16-4z"/><path fill="#a9c8f0" d="M3 10a3 3 0 0 1 0-6q2-5 7-2 4 2 4 8z"/><path fill="#a9c8f0" d="M14 22a2.500 2.500 0 0 1 0-5q2-4 6-2 4 0 4 4 0 3-3 3z"/><circle cx="18" cy="6" r="6" fill="#c42b1c"/><text class="badge" x="16" y="10">1</text></svg><span>13°C</span><span>Parc. nublado</span></button>
        <svg class="tray t-up" width="13" height="8" viewBox="0 0 13 8"><path fill="none" stroke="#fff" stroke-width="1.300" d="m1 7 5.500-6L12 7"/></svg>
        <svg class="tray t-bat" width="17" height="12" viewBox="0 0 17 12"><path fill="#fff" d="M6 4h8v5H6z"/><path fill="none" stroke="#fff" d="M6 2.500h9.500v8h-11V7M16.500 5v3M1 1v2M4 1v2M.5 3.500h4v2h-4zM2.500 6v3"/></svg>
        <svg class="tray t-wifi" width="14" height="14" viewBox="0 0 14 14"><g fill="none" stroke="#ddd" stroke-width="1.200"><path stroke="#888" d="M1 12Q1 1 13 1"/><path d="M4 12q0-8 9-8M7 13q0-6 6-6"/></g><circle cx="12" cy="12" r="2" fill="#fff"/></svg>
        <svg class="tray t-vol" width="17" height="14" viewBox="0 0 17 14"><path fill="none" stroke="#fff" d="M.5 4.500H3L7 1v12L3 9.500H.5zM9 5q1.500 2 0 4M11.500 3q3 4 0 8M14 1q4 6 0 12"/></svg>
        <span class="lang">CAT</span>
        <div class="clock"><span>19:11</span><span>10/12/2023</span></div>
        <svg class="tray t-note" width="17" height="17" viewBox="0 0 17 17"><path fill="#fff" d="M0 0h17v13h-6l-3 4-2-4H0z"/><path stroke="#191919" d="M3 3.500h11M3 6.500h11M3 9.500h7"/></svg>
        <i class="peek"></i>
    </footer>

    <!-- hand-drawn pointers over the editor -->
    <svg class="pointers" viewBox="0 0 1920 1080" preserveAspectRatio="none">
        <path stroke="#fff" stroke-width="2" d="m986 266 15-62M1346 701l290 8"/>
        <path fill="#fff" d="m1004 187-9 18 10 2zM1654 710l-19-6v10z"/>
    </svg>
    <script src="scene.js"></script>
</body>
</html>
```

FILE: styles.css
```
* {
    box-sizing: border-box;
}
body {
    margin: 0;
    height: 100vh;
    display: flex;
    flex-direction: column;
    overflow: hidden;
    background: #191919;
    color: #c0c0c0;
    font-family: Inter, "Liberation Sans", sans-serif;
    font-size: 12px;
    line-height: 16px;
}
button, input, select {
    margin: 0;
    padding: 0;
    border: none;
    background: none;
    color: inherit;
    font: inherit;
    min-width: 0;
    outline: none;
}
button {
    display: flex;
    align-items: center;
    justify-content: center;
}
svg {
    flex: none;
    display: block;
}
b {
    font-weight: 600;
}
ul {
    list-style: none;
    margin: 0;
    padding: 0;
}
select {
    appearance: none;
    background-repeat: no-repeat;
    background-position: right 5px center;
    background-image: url("data:image/svg+xml,%3Csvg xmlns='http://www.w3.org/2000/svg' width='8' height='6'%3E%3Cpath fill='%23c4c4c4' d='M0 1h8L4 5.500z'/%3E%3C/svg%3E");
}
.sprite {
    position: absolute;
    width: 0;
    height: 0;
}
.grow {
    flex: 1;
}
.caret {
    width: 8px;
    height: 6px;
    color: #c4c4c4;
}
.dots {
    width: 4px;
    height: 14px;
    color: #c4c4c4;
}
.lock {
    width: 12px;
    height: 14px;
    margin-left: auto;
    color: #c4c4c4;
}
.fold {
    width: 10px;
    height: 10px;
    color: #6e6e6e;
}
.ico14 {
    width: 14px;
    height: 14px;
}
.ico16 {
    width: 16px;
    height: 16px;
}

/* window frame */
.titlebar, .menubar {
    background: #fff;
    color: #000;
    font-family: Roboto, "Noto Sans", sans-serif;
    display: flex;
    align-items: center;
}
.titlebar {
    height: 22px;
    padding: 0 2px;
    gap: 5px;
}
.title {
    flex: 1;
}
.winbtns {
    display: flex;
}
.winbtns button {
    width: 46px;
    height: 22px;
}
.winbtns svg {
    width: 10px;
    height: 10px;
}
.menubar {
    height: 21px;
    padding-left: 7px;
    gap: 13px;
    border-bottom: 2px solid #f0f0f0;
}
.menubar a {
    color: #000;
    text-decoration: none;
}

/* main toolbar */
.topbar {
    height: 30px;
    flex: none;
    padding: 0 10px 0 8px;
    display: grid;
    grid-template-columns: 1fr auto 1fr;
    align-items: center;
}
.group, .play {
    display: flex;
    align-items: center;
    gap: 6px;
}
.play {
    gap: 1px;
    margin-left: 3px;
}
.right {
    justify-content: flex-end;
}
.tbtn {
    height: 18px;
    background: #333;
    border-radius: 2px;
}
.sq {
    width: 30px;
}
.play .sq {
    width: 31px;
    background: #3a3a3a;
}
.play .dim {
    background: #282828;
}
.account {
    width: 56px;
    gap: 8px;
}
.store {
    width: 100px;
    gap: 3px;
}
.topselect {
    width: 78px;
    height: 18px;
    padding-left: 3px;
    background-color: #333;
    background-position: right 3px center;
}

/* docking layout */
.editor {
    flex: 1;
    min-height: 0;
    display: grid;
    grid-template-columns: minmax(0, 875fr) minmax(0, 611fr) 430px;
    gap: 2px;
}
.column {
    display: flex;
    flex-direction: column;
    min-height: 0;
    gap: 2px;
}
.panel {
    min-height: 0;
    display: flex;
    flex-direction: column;
    background: #383838;
    overflow: hidden;
}
.upper {
    flex: 559 1 0;
}
.lower {
    flex: 384 1 0;
}
.tabs {
    height: 19px;
    flex: none;
    display: flex;
    align-items: center;
    background: #282828;
    padding-right: 11px;
    gap: 10px;
}
.tabs > .dots:not(.lock + .dots) {
    margin-left: auto;
}
.tab {
    height: 19px;
    display: flex;
    align-items: center;
    gap: 4px;
    background: #3c3c3c;
    border-radius: 3px 3px 0 0;
    border-right: 1px solid #1f1f1f;
}
.tab.off {
    background: none;
    margin-right: -10px;
}
.focus {
    border-top: 2px solid #2c5d87;
}
.scene-tab {
    width: 77px;
    padding-left: 7px;
}
.console-tab {
    width: 89px;
    padding-left: 8px;
}
.game-tab {
    width: 74px;
    padding-left: 4px;
}
.hier-tab {
    width: 96px;
    padding-left: 8px;
}
.proj-tab {
    width: 78px;
    padding-left: 5px;
}
.insp-tab {
    width: 96px;
    padding-left: 9px;
}

/* scene toolbar */
.scenebar {
    height: 26px;
    flex: none;
    display: flex;
    align-items: center;
    gap: 4px;
    padding: 0 4px 0 6px;
    background: #3c3c3c;
}
.grip {
    width: 4px;
    height: 16px;
    border: solid #5a5a5a;
    border-width: 0 1px;
    margin-right: 2px;
}
.wide {
    margin: 0 2px 0 6px;
}
.sbtn {
    height: 20px;
    background: #585858;
    border-radius: 2px;
    gap: 4px;
    color: #c4c4c4;
}
.sbtn.on {
    background: #46607c;
    color: #fff;
}
.pivot {
    width: 75px;
    gap: 3px;
}
.space {
    width: 72px;
    gap: 2px;
}
.split {
    display: flex;
    gap: 1px;
}
.w14 {
    width: 14px;
}
.w22 {
    width: 22px;
}
.w32 {
    width: 32px;
}
.w36 {
    width: 36px;
}
.two {
    font-size: 11px;
    font-weight: 600;
}
.viewport {
    flex: 1;
    min-height: 0;
    position: relative;
    background:
        linear-gradient(to right, rgba(255, 255, 255, 0.25), transparent 50%) top / 100% 50px no-repeat,
        linear-gradient(#b2cee8 0, #c4e2f2 16px, #dcf7fa 38px, #cfe6e8 49px, #a8b6b7 58px, #7e8182 65px, #6c6868 70px, #696361 100px, #67605b 200px, #67605b 100%);
}
.world {
    width: 100%;
    height: 100%;
}
.tools {
    position: absolute;
    left: 2px;
    top: 2px;
    width: 43px;
    padding: 5px 3px 3px;
    display: flex;
    flex-direction: column;
    gap: 1px;
    background: rgba(20, 20, 20, 0.94);
    border-radius: 3px;
}
.bars {
    width: 16px;
    height: 4px;
    margin: 0 auto 8px;
    border: solid #6a6a6a;
    border-width: 1px 0;
}
.tool {
    height: 20px;
    background: #585858;
    color: #c4c4c4;
}
.tool svg {
    width: 16px;
    height: 16px;
}
.tool.on {
    background: #46607c;
}
.tool.bare {
    height: 24px;
    background: none;
}
.orient {
    position: absolute;
    top: 0;
    right: 0;
}
.axis {
    fill: #eee;
    font-size: 12px;
    font-weight: 700;
}
.persp {
    fill: #bdbab8;
    font-size: 13px;
}

/* game */
.gamebar {
    height: 20px;
    flex: none;
    display: flex;
    background: #3c3c3c;
    border-bottom: 1px solid #232323;
    padding-right: 2px;
    overflow: hidden;
}
.gsel, .gbtn, .g-scale {
    height: 20px;
    border-right: 1px solid #232323;
    flex: none;
    padding-left: 4px;
}
.g-view {
    width: 90px;
}
.g-display {
    width: 86px;
    padding-left: 9px;
}
.g-aspect {
    width: 160px;
}
.g-scale {
    flex: 1 1 239px;
    display: flex;
    align-items: center;
    gap: 6px;
    padding: 0 29px 0 7px;
}
.g-focus {
    width: 110px;
}
.gbtn {
    width: 26px;
    padding: 0;
}
.stats {
    width: 40px;
    color: #999;
}
.g-gizmos {
    width: 70px;
    padding-left: 3px;
}
.slider {
    appearance: none;
    flex: 1;
    height: 12px;
}
.slider::-webkit-slider-runnable-track {
    height: 2px;
    background: #5e5e5e;
}
.slider::-webkit-slider-thumb {
    appearance: none;
    width: 10px;
    height: 10px;
    margin-top: -4px;
    border-radius: 50%;
    background: #999;
}
.gameview {
    flex: 1;
    background: #000;
}

/* hierarchy and project */
.listbar {
    height: 20px;
    flex: none;
    display: flex;
    align-items: center;
    background: #3c3c3c;
    border-bottom: 1px solid #232323;
    padding-left: 7px;
}
.project-bar {
    padding-left: 5px;
}
.add {
    gap: 4px;
}
.search {
    height: 16px;
    display: flex;
    align-items: center;
    gap: 4px;
    margin-left: auto;
    padding: 0 2px 0 4px;
    background: #2a2a2a;
    border: 1px solid #191919;
    border-radius: 3px;
}
.search input {
    flex: 1;
}
.search input::placeholder {
    color: #7d7d7d;
}
.hsearch {
    width: 325px;
    margin-right: 4px;
}
.psearch {
    width: 317px;
    margin-right: 4px;
}
.open {
    width: 12px;
    height: 12px;
}
.hierarchy {
    flex: 1;
    padding-top: 1px;
    background: linear-gradient(to right, #323232 32px, transparent 32px);
}
.hierarchy li {
    height: 16px;
    display: flex;
    align-items: center;
    padding-left: 47px;
    gap: 3px;
}
.hierarchy .scene-row {
    padding: 0 10px 0 33px;
    gap: 4px;
    background: #2b2b2b;
    border-bottom: 1px solid #3e3e3e;
    color: #d2d2d2;
}
.scene-row .dots {
    margin-left: auto;
}
.uni {
    width: 14px;
    height: 14px;
}
.hierarchy .selected, .tree .selected {
    background: #4d4d4d;
}
.filters {
    display: flex;
    height: 20px;
}
.filters button {
    width: 26px;
    border-left: 1px solid #232323;
}
.filters .hidden-count {
    width: 40px;
    gap: 1px;
}
.browser {
    flex: 1;
    min-height: 0;
    display: flex;
}
.tree {
    width: 280px;
    overflow: hidden;
}
.tree li {
    height: 16px;
    display: flex;
    align-items: center;
    gap: 4px;
    padding-left: 15px;
}
.tree .root {
    padding-left: 2px;
    color: #cacaca;
}
.fd {
    width: 13px;
    height: 11px;
}
.fo {
    width: 14px;
    height: 11px;
}
.scroll {
    width: 13px;
    flex: none;
    display: flex;
    flex-direction: column;
    background: #353535;
    padding: 5px 1px;
}
.up, .down {
    width: 0;
    margin: 0 auto;
    border: solid transparent;
    border-width: 0 4px 5px;
    border-bottom-color: #c4c4c4;
}
.down {
    border-width: 5px 4px 0;
    border-top-color: #c4c4c4;
    margin-top: auto;
}
.thumb {
    background: #5f5f5f;
    border-radius: 5px;
}
.tree-scroll .thumb {
    height: 48%;
    margin-top: 40px;
}
.insp-scroll .thumb {
    height: 60%;
    max-height: 515px;
    margin-top: 7px;
}
.assets {
    flex: 1;
    display: flex;
    flex-direction: column;
    background: #333;
    border-left: 1px solid #232323;
}
.crumbs {
    height: 22px;
    display: flex;
    align-items: center;
    gap: 8px;
    padding-left: 4px;
    background: #404040;
    color: #aaa;
}
.crumbs b {
    color: #c4c4c4;
}
.asset {
    display: flex;
    align-items: center;
    gap: 4px;
    padding-left: 16px;
    font-size: 13px;
}
.assets-foot {
    height: 21px;
    margin-top: auto;
    display: flex;
    justify-content: flex-end;
    align-items: center;
    padding-right: 16px;
    background: #404040;
}
.assets-foot .slider {
    flex: none;
    width: 55px;
}

/* inspector */
.insp-body {
    flex: 1;
    min-height: 0;
    display: flex;
}
.inspector b {
    font-size: 13px;
}
.props {
    flex: 1;
    min-width: 0;
    overflow: hidden;
}
.object {
    height: 59px;
    display: flex;
    padding: 9px 4px 0 5px;
    background: #3c3c3c;
}
.objicon {
    width: 28px;
    display: flex;
    flex-direction: column;
}
.objicon .caret {
    align-self: flex-end;
}
.bigcube {
    width: 25px;
    height: 25px;
}
.object-rows {
    flex: 1;
    display: flex;
    flex-direction: column;
    gap: 6px;
}
.orow {
    height: 18px;
    display: flex;
    align-items: center;
    padding-left: 15px;
}
.orow + .orow {
    padding-left: 7px;
}
.check {
    appearance: none;
    width: 14px;
    height: 14px;
    flex: none;
    background: #2a2a2a;
    border: 1px solid #1c1c1c;
    border-radius: 2px;
}
.check:checked {
    background: #2a2a2a url("data:image/svg+xml,%3Csvg xmlns='http://www.w3.org/2000/svg' width='12' height='12'%3E%3Cpath fill='none' stroke='%23eee' stroke-width='1.600' d='M2.500 6l2.500 2.500L10 3.500'/%3E%3C/svg%3E") center no-repeat;
}
.check:disabled {
    background: #323232;
    border-color: #2d2d2d;
}
.field {
    height: 18px;
    padding: 0 3px;
    background: #2a2a2a;
    border: 1px solid #1f1f1f;
    border-radius: 3px;
    color: #d0d0d0;
}
.name {
    flex: 1;
    margin: 0 3px 0 6px;
    padding-left: 2px;
    font-size: 13px;
    font-weight: 600;
}
.static {
    width: 50px;
    padding-left: 4px;
    color: #a0a0a0;
}
.orow .caret {
    margin-right: 2px;
}
.drop {
    flex: 1;
    height: 18px;
    padding-left: 3px;
    background-color: #515151;
    border: 1px solid #303030;
    border-radius: 3px;
    color: #d8d8d8;
}
.orow .tag {
    flex: none;
    width: 152px;
}
.taglabel {
    width: 27px;
    color: #a0a0a0;
}
.layerlabel {
    width: 53px;
    padding-left: 14px;
    color: #a0a0a0;
}
.comp-head {
    height: 22px;
    display: flex;
    align-items: center;
    padding: 0 11px 0 5px;
    background: #3e3e3e;
    border-top: 1px solid #1a1a1a;
    border-bottom: 1px solid #303030;
}
.comp-head b {
    flex: 1;
    padding-left: 5px;
    color: #c8c8c8;
}
.cico {
    width: 16px;
    height: 14px;
    margin: 0 4px 0 5px;
}
.mesh {
    padding-right: 2px;
}
.green {
    color: #b5ed5e;
}
.blue {
    color: #7fd6fd;
}
.nocheck {
    width: 14px;
}
.hico {
    width: 12px;
    height: 12px;
    margin-right: 8px;
    color: #c4c4c4;
}
.hico + .dots {
    margin-left: 4px;
}
.comp-body {
    display: flex;
    flex-direction: column;
    gap: 2px;
    padding: 4px 4px 9px 19px;
}
.row {
    height: 18px;
    display: flex;
    align-items: center;
}
.lbl {
    width: 149px;
    flex: none;
    display: flex;
    align-items: center;
    white-space: nowrap;
    overflow: hidden;
}
.row .fold {
    margin-left: -12px;
    margin-right: 2px;
}
.shift .lbl {
    width: 153px;
    margin-right: 2px;
}
.sub {
    padding-left: 15px;
}
.dis {
    color: #707070;
}
.vec label {
    width: 16px;
}
.vec .field {
    flex: 1;
}
.vec .field + label {
    margin-left: 4px;
}
.link {
    width: 13px;
    height: 11px;
    margin: 0 8px 0 auto;
}
.dotted {
    flex: 1;
    height: 18px;
    border: 1px solid #2a2a2a;
    border-radius: 3px;
    background: conic-gradient(from 270deg at 1px 2px, #8c8c8c 25%, transparent 0) 2px 2px / 4px 4px, #fff;
}
.framed {
    border-width: 1px 2px;
}
.dotted:disabled {
    background: conic-gradient(from 270deg at 1px 2px, #5c5c5c 25%, transparent 0) 2px 2px / 4px 4px, #999;
}
.plane {
    padding: 3px 4px 7px 19px;
}
.visual {
    padding-bottom: 8px;
}
.collider {
    padding-bottom: 7px;
}
.filter {
    padding-top: 3px;
    padding-bottom: 8px;
}
.objfield {
    flex: 1;
    height: 18px;
    display: flex;
    align-items: center;
    overflow: hidden;
    background: #2a2a2a;
    border: 1px solid #1f1f1f;
    border-radius: 3px;
}
.objfield input {
    flex: 1;
    padding-left: 2px;
}
.objfield button {
    width: 18px;
    height: 18px;
    background: #373737;
}
.objfield button svg {
    width: 12px;
    height: 12px;
}
.ball {
    width: 10px;
    height: 10px;
    margin-left: 3px;
}
.renderer {
    gap: 0;
    padding-bottom: 8px;
}
.count {
    width: 48px;
    margin-left: auto;
}
.element {
    height: 27px;
    margin-top: 3px;
    padding: 0 6px;
    display: flex;
    align-items: center;
    background: #414141;
    border: 1px solid #242424;
    border-radius: 3px;
}
.handle {
    width: 10px;
    margin-right: 12px;
    border-top: 1px solid #666;
}
.element label {
    width: 128px;
}
.listfoot {
    width: 58px;
    height: 19px;
    margin: -1px 10px 0 auto;
    padding: 0 2px;
    display: flex;
    background: #414141;
    border: 1px solid #242424;
    border-top: none;
    border-radius: 0 0 3px 3px;
}
.listfoot button {
    flex: 1;
}
.listfoot svg {
    width: 12px;
    height: 12px;
}
.folds {
    padding-top: 3px;
}
.folds div {
    height: 19px;
    display: flex;
    align-items: center;
    gap: 2px;
    margin-left: -12px;
}
.line {
    padding-top: 10px;
}
.toolbox {
    margin: 0 6px 7px 0;
    padding: 11px 9px 8px;
    border: 1px solid #191919;
    background: #414141;
}
.trow {
    height: 20px;
    display: flex;
    align-items: center;
    gap: 4px;
}
.tall {
    height: 22px;
    align-items: flex-start;
}
.tl {
    width: 143px;
}
.pair {
    display: flex;
    border: 1px solid #191919;
    border-radius: 3px;
    background: #383838;
}
.pair button {
    width: 31px;
    height: 20px;
}
.pair button + button {
    border-left: 1px solid #191919;
}
.tol {
    width: 35px;
}
.simplify {
    flex: 1;
    height: 18px;
    background: #585858;
    border: 1px solid #303030;
    border-radius: 3px;
    color: #e0e0e0;
}
.width {
    height: 40px;
    display: flex;
    flex-direction: column;
    margin-top: 4px;
    padding-left: 3px;
    background: #2a2a2a;
    border: 1px solid #1a1a1a;
    border-radius: 3px 3px 0 0;
}
.wval {
    padding-left: 10px;
}

/* status bar and taskbar */
.statusbar {
    height: 22px;
    flex: none;
    display: flex;
    justify-content: flex-end;
    padding-right: 2px;
    background: #191919;
}
.statusbar button {
    width: 26px;
    border-left: 1px solid #242424;
}
.statusbar svg {
    width: 16px;
    height: 16px;
    color: #c4c4c4;
}
.taskbar {
    height: 40px;
    flex: none;
    display: flex;
    align-items: center;
    background: #1e1e1e;
    color: #fff;
    font-family: "Open Sans", "Noto Sans", sans-serif;
    padding-right: 4px;
}
.start {
    width: 48px;
}
.wsearch {
    width: 288px;
    height: 40px;
    display: flex;
    align-items: center;
    padding-left: 11px;
    background: #333;
    border: 1px solid #5c5c5c;
    font-size: 14px;
}
.wsearch input {
    flex: 1;
    padding-left: 10px;
}
.wsearch input::placeholder {
    color: #d8d8d8;
}
.app {
    width: 49px;
    height: 40px;
    border-bottom: 2px solid transparent;
}
.app.run {
    width: 41px;
    margin: 0 4px;
    border-bottom-color: #76b9ed;
}
.app.active {
    width: 49px;
    margin: 0;
    background: #4a4a4a;
}
.ps {
    fill: #9db7e8;
    font-size: 12px;
    font-weight: 700;
}
.avatar, .badge {
    fill: #fff;
    font-size: 10px;
}
.weather {
    font-size: 13px;
    gap: 8px;
    margin-right: 24px;
}
.t-bat, .t-wifi {
    margin-left: 10px;
}
.t-vol {
    margin: 0 11px 0 7px;
}
.clock {
    display: flex;
    flex-direction: column;
    align-items: center;
    margin: 0 14px 0 9px;
    font-size: 11px;
    line-height: 19px;
}
.peek {
    height: 40px;
    margin-left: 20px;
    border-left: 1px solid #5a5a5a;
}
.pointers {
    position: absolute;
    left: 0;
    top: 0;
    width: 100%;
    height: 100%;
    pointer-events: none;
}
```

FILE: scene.js
```
// ground grid seen in perspective: a and b are the two ground axes
const CX = 437.5, HORIZON = 33, K = 505, H = 720, D = 3.21;
const NEAR = 0.6;

function project(a, b) {
    const depth = D - (a + b);
    return [CX + K * (b - a) / depth, HORIZON + H / depth];
}

function gridPath(step, from, far) {
    let d = '';
    const count = Math.round((D - from) / step);
    for (let i = 0; i <= count * 2; i++) {
        const c = from + i * step;
        // both ends stay in front of the camera
        const end = D - NEAR - c;
        const start = Math.min(-far, end - 1);
        const p = project(start, c), q = project(end, c);
        const r = project(c, start), s = project(c, end);
        d += `M${p}L${q}M${r}L${s}`;
    }
    return d;
}

document.getElementById('major').setAttribute('d', gridPath(1, -20, 25));
document.getElementById('minor').setAttribute('d', gridPath(0.1, -3, 4));
```
